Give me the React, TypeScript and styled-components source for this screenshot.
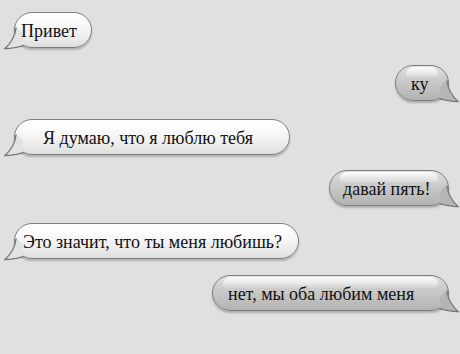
import React from 'react'
import styled, { createGlobalStyle, css } from 'styled-components'

const GlobalStyle = createGlobalStyle`
  html, body {
    margin: 0;
    padding: 0;
    background: #e0e0e0;
  }
`

type Side = 'left' | 'right'

interface Message {
  text: string
  side: Side
  width: number
  padLeft: number
  gap: number
}

const messages: Message[] = [
  { text: 'Привет', side: 'left', width: 78, padLeft: 6, gap: 12 },
  { text: 'ку', side: 'right', width: 54, padLeft: 15, gap: 17 },
  { text: 'Я думаю, что я люблю тебя', side: 'left', width: 276, padLeft: 28, gap: 18 },
  { text: 'давай пять!', side: 'right', width: 120, padLeft: 13, gap: 15 },
  { text: 'Это значит, что ты меня любишь?', side: 'left', width: 285, padLeft: 8, gap: 17 },
  { text: 'нет, мы оба любим меня', side: 'right', width: 237, padLeft: 15, gap: 16 },
]

const Chat = styled.div`
  width: 460px;
  height: 354px;
  box-sizing: border-box;
  padding: 0 11px 0 14px;
  display: flex;
  flex-direction: column;
  overflow: hidden;
  font-family: "Liberation Serif", "DejaVu Serif", "Times New Roman", serif;
`

const Row = styled.div<{ $side: Side; $gap: number }>`
  display: flex;
  justify-content: ${(p) => (p.$side === 'left' ? 'flex-start' : 'flex-end')};
  margin-top: ${(p) => p.$gap}px;
`

const Bubble = styled.div<{ $side: Side; $width: number; $padLeft: number }>`
  position: relative;
  box-sizing: border-box;
  width: ${(p) => p.$width}px;
  height: 36px;
  padding-left: ${(p) => p.$padLeft}px;
  display: flex;
  align-items: center;
  border: 1.5px solid #7e7e7e;
  border-radius: 18px;
  font-family: "Liberation Serif", "DejaVu Serif", serif;
  font-size: 18px;
  color: #111;
  white-space: nowrap;
  box-shadow: 0 2px 2px rgba(0, 0, 0, 0.22);
  ${(p) =>
    p.$side === 'left'
      ? css`
          background: linear-gradient(to bottom, #ffffff 0%, #f6f6f6 45%, #e9e9e9 80%, #dcdcdc 100%);
        `
      : css`
          background: linear-gradient(to bottom, #e2e2e2 0%, #cdcdcd 35%, #bfbfbf 70%, #b3b3b3 100%);
        `}

  &::before {
    content: '';
    position: absolute;
    left: 10px;
    right: 10px;
    top: 1px;
    height: 11px;
    border-radius: 12px 12px 6px 6px;
    background: linear-gradient(to bottom, rgba(255, 255, 255, 0.9), rgba(255, 255, 255, 0.1));
  }
`

const Text = styled.span`
  position: relative;
  line-height: 1;
  top: 1px;
`

const TailSvg = styled.svg<{ $side: Side }>`
  position: absolute;
  bottom: -3px;
  width: 22px;
  height: 26px;
  overflow: visible;
  ${(p) =>
    p.$side === 'left'
      ? css`
          left: -11px;
        `
      : css`
          right: -11px;
          transform: scaleX(-1);
        `}
`

const Tail: React.FC<{ side: Side }> = ({ side }) => {
  const fill = side === 'left' ? '#e2e2e2' : '#b5b5b5'
  return (
    <TailSvg $side={side} viewBox="0 0 22 26">
      <path
        d="M12.5 3 C11.5 12 7 19 1 24.5 C8 25 14 23 19 21.5 L19 10 Z"
        fill={fill}
      />
      <path
        d="M12 4 C11 12 7 19 1 24.5 C8 25 14 23 19 21.8"
        fill="none"
        stroke="#7a7a7a"
        strokeWidth="1.4"
        strokeLinecap="round"
      />
    </TailSvg>
  )
}

const App: React.FC = () => {
  return (
    <>
      <GlobalStyle />
      <Chat>
        {messages.map((m) => (
          <Row key={m.text} $side={m.side} $gap={m.gap}>
            <Bubble $side={m.side} $width={m.width} $padLeft={m.padLeft}>
              <Tail side={m.side} />
              <Text>{m.text}</Text>
            </Bubble>
          </Row>
        ))}
      </Chat>
    </>
  )
}

export default App
